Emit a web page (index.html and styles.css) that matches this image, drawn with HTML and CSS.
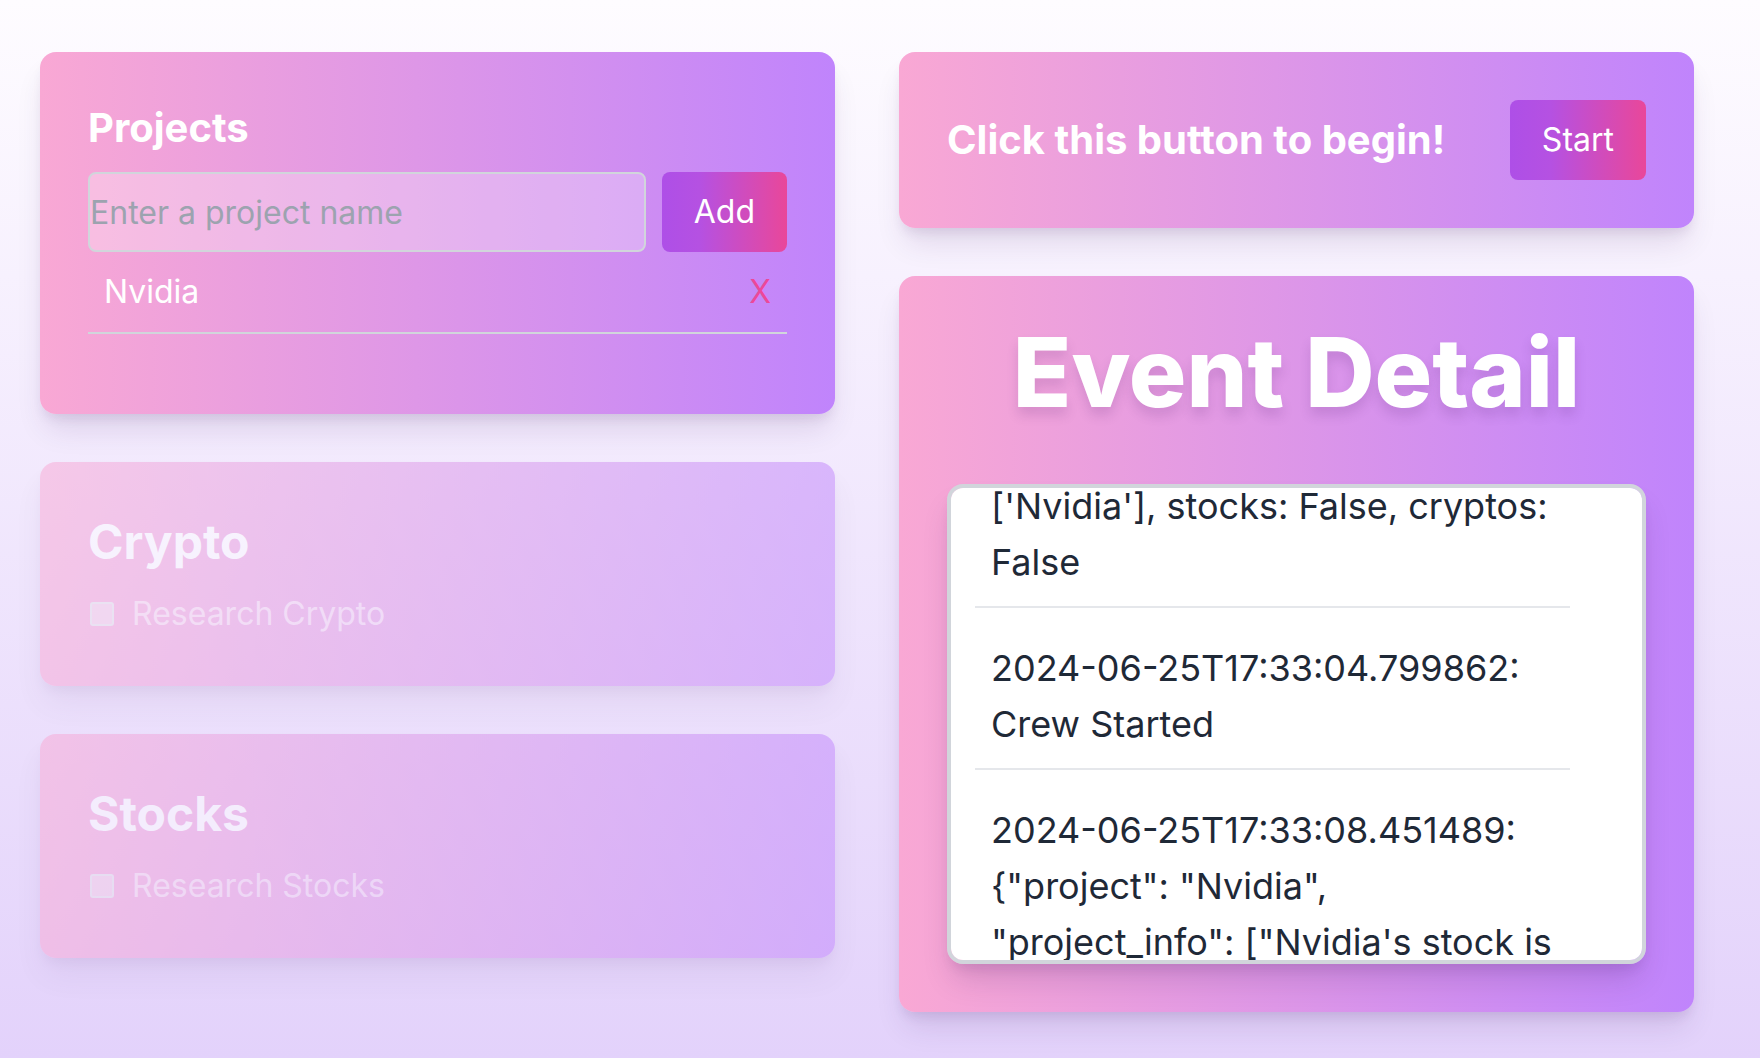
FILE: index.html
```html
<!DOCTYPE html>
<html lang="en">
<head>
<meta charset="utf-8">
<title>Crew Dashboard</title>
<link rel="stylesheet" href="styles.css">
</head>
<body>
<main class="layout">
  <section class="column">
    <div class="card">
      <h2 class="card-title">Projects</h2>
      <div class="add-row">
        <input class="project-input" type="text" placeholder="Enter a project name">
        <button class="btn">Add</button>
      </div>
      <ul class="project-list">
        <li class="project-item"><span>Nvidia</span><button class="remove">X</button></li>
      </ul>
    </div>
    <div class="card card-disabled">
      <h2 class="card-title card-title-lg">Crypto</h2>
      <label class="check-row"><input type="checkbox" class="check" disabled><span>Research Crypto</span></label>
    </div>
    <div class="card card-disabled">
      <h2 class="card-title card-title-lg">Stocks</h2>
      <label class="check-row"><input type="checkbox" class="check" disabled><span>Research Stocks</span></label>
    </div>
  </section>
  <section class="column">
    <div class="card start-card">
      <p class="start-text">Click this button to begin!</p>
      <button class="btn">Start</button>
    </div>
    <div class="card event-card">
      <h1 class="event-title">Event Detail</h1>
      <div class="log" id="log">
        <ul class="log-list">
          <li class="log-item">2024-06-25T17:33:04.798540: Received inputs - projects: ['Nvidia'], stocks: False, cryptos: False</li>
          <li class="log-item">2024-06-25T17:33:04.799862: Crew Started</li>
          <li class="log-item">2024-06-25T17:33:08.451489: {"project": "Nvidia", "project_info": ["Nvidia's stock is currently trading near record highs after strong data center demand", "Analysts expect continued growth in AI chip sales"]}</li>
        </ul>
      </div>
    </div>
  </section>
</main>
<script src="script.js"></script>
</body>
</html>
```

FILE: styles.css
```css
* { box-sizing: border-box; }

html, body {
  margin: 0;
  height: 100%;
}

body {
  font-family: "Inter", "Noto Sans", sans-serif;
  background: linear-gradient(180deg, #fefcff 0%, #e3d2fb 100%);
  min-height: 1058px;
  overflow: hidden;
}

.layout {
  display: grid;
  grid-template-columns: 795px 795px;
  column-gap: 64px;
  padding: 52px 0 0 40px;
  align-items: start;
}

.column {
  display: flex;
  flex-direction: column;
  gap: 48px;
}

.card {
  background: linear-gradient(to right, #f9a8d4, #c084fc);
  border-radius: 16px;
  padding: 48px;
  box-shadow: 0 20px 30px -6px rgba(60, 20, 90, 0.12), 0 8px 12px -4px rgba(60, 20, 90, 0.1);
  color: #fff;
}

.card-title {
  margin: 0 0 16px;
  font-size: 40px;
  line-height: 56px;
  font-weight: 700;
}

.card-title-lg {
  font-size: 48px;
  line-height: 64px;
}

.add-row {
  display: flex;
  gap: 16px;
}

.project-input {
  flex: 1;
  min-width: 0;
  height: 80px;
  border: 2px solid #d1d5db;
  border-radius: 8px;
  background: rgba(255, 255, 255, 0.28);
  font-family: inherit;
  font-size: 32px;
  padding: 0;
  color: #fff;
  outline: none;
}

.project-input::placeholder {
  color: #9ca3af;
}

.btn {
  height: 80px;
  padding: 0 32px;
  border: 0;
  border-radius: 8px;
  background: linear-gradient(to right, #ae4fe7 0%, #b551e2 30%, #e9479a 100%);
  color: #fff;
  font-family: inherit;
  font-size: 32px;
  line-height: 48px;
  cursor: pointer;
}

.project-list {
  list-style: none;
  margin: 0 0 32px;
  padding: 0;
}

.project-item {
  display: flex;
  justify-content: space-between;
  align-items: center;
  padding: 16px;
  border-bottom: 2px solid #d1d5db;
  font-size: 32px;
  line-height: 48px;
}

.remove {
  background: none;
  border: 0;
  padding: 0;
  color: #ec4899;
  font-family: inherit;
  font-size: 32px;
  line-height: 48px;
}

.card-disabled {
  opacity: 0.5;
}

.check-row {
  display: flex;
  align-items: center;
  gap: 18px;
  font-size: 32px;
  line-height: 48px;
  color: rgba(255, 255, 255, 0.6);
}

.check {
  appearance: none;
  -webkit-appearance: none;
  width: 24px;
  height: 24px;
  margin: 0 0 0 2px;
  border: 2px solid rgba(229, 231, 235, 0.8);
  border-radius: 3px;
  background: rgba(243, 244, 246, 0.5);
}

.start-card {
  display: flex;
  justify-content: space-between;
  align-items: center;
}

.start-text {
  margin: 0;
  font-size: 40px;
  line-height: 56px;
  font-weight: 700;
}

.event-title {
  margin: 0 0 64px;
  font-size: 96px;
  line-height: 96px;
  font-weight: 800;
  text-align: center;
  text-shadow: 0 8px 12px rgba(80, 30, 110, 0.16);
}

.log {
  height: 480px;
  background: #fff;
  border: 4px solid #d1d5db;
  border-radius: 16px;
  overflow-y: auto;
  scrollbar-width: none;
  box-shadow: 0 20px 30px -6px rgba(60, 20, 90, 0.18), 0 8px 12px -4px rgba(60, 20, 90, 0.1);
}

.log::-webkit-scrollbar {
  display: none;
}

.log-list {
  list-style: none;
  margin: 0;
  padding: 24px 72px 24px 24px;
}

.log-item {
  padding: 16px;
  border-bottom: 2px solid #e5e7eb;
  font-size: 36px;
  line-height: 56px;
  color: #1f2937;
}

.log-item + .log-item {
  margin-top: 16px;
}
```

FILE: script.js
```js
document.getElementById('log').scrollTop = 162;
```
